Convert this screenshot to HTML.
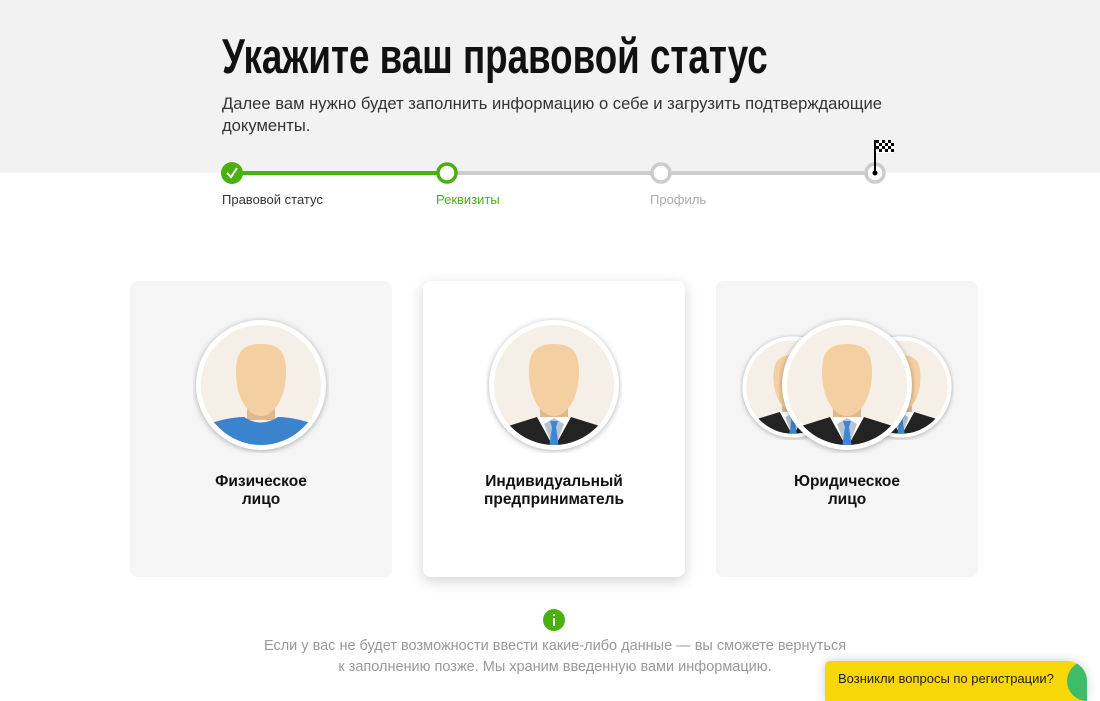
<!DOCTYPE html><html><head><meta charset="utf-8"><style>
*{margin:0;padding:0;box-sizing:border-box}
body{width:1100px;height:693px;overflow:hidden;background:#fff;font-family:"Liberation Sans",sans-serif;position:relative}
.hdr{position:absolute;left:0;top:0;width:1100px;height:173px;background:#f2f2f2}
h1{position:absolute;left:222px;top:29px;font-weight:bold;font-size:49px;color:#111;white-space:nowrap;transform:scaleX(0.75);transform-origin:0 0}
.sub{position:absolute;left:222px;top:93px;font-size:16.6px;line-height:22px;color:#333;width:700px}
.lbl{position:absolute;top:192px;font-size:13px}
.card{position:absolute;top:281px;width:262px;height:296px;border-radius:8px;background:#f5f5f5}
.card.w{background:#fff;box-shadow:0 4px 14px rgba(0,0,0,.18)}
.ct{position:absolute;left:0;width:100%;top:192px;text-align:center;font-weight:bold;font-size:15.5px;line-height:18px;color:#111}
.av{position:absolute}
.note{position:absolute;left:150px;width:810px;top:636px;text-align:center;font-size:14.5px;line-height:21px;color:#999}
.help{position:absolute;left:825px;top:661px;width:262px;height:40px;background:#f7d708;border-radius:5px 20px 0 0;box-shadow:0 0 10px rgba(0,0,0,.2);overflow:hidden;font-size:13px;color:#222;padding:10px 0 0 13px}
.help:after{content:"";position:absolute;right:-20px;top:0;width:40px;height:40px;border-radius:50%;background:#3dbd6a}
</style></head><body>
<svg width="0" height="0" style="position:absolute"><defs>
<clipPath id="cc"><circle cx="65" cy="65" r="60"/></clipPath>
<g id="head"><rect x="0" y="0" width="130" height="130" fill="#f5efe8"/>
<path d="M51 78 L51 100 L79 100 L79 78Z" fill="#dfb98d"/>
<path d="M65 24 C45 24 40 34 40 52 C40 78 52 96 65 96 C78 96 90 78 90 52 C90 34 85 24 65 24Z" fill="#f4cfa1"/></g>
<g id="suit"><use href="#head"/>
<path d="M0 130 L0 112 L48 97 L82 97 L130 112 L130 130Z" fill="#232323"/>
<path d="M48 97 L65 128 L82 97Z" fill="#fff"/>
<path d="M55 104 L65 130 L75 104 L65 98Z" fill="#b8c4d3"/>
<path d="M61 101 L69 101 L67 107 L70 128 L60 128 L63 107Z" fill="#3b87d6"/></g>
<g id="shirt"><use href="#head"/>
<path d="M0 130 L0 108 Q30 97 48 97 Q65 108 82 97 Q100 97 130 108 L130 130Z" fill="#3b83cc"/></g>
</defs></svg>
<div class="hdr"></div>
<h1>Укажите ваш правовой статус</h1>
<div class="sub">Далее вам нужно будет заполнить информацию о себе и загрузить подтверждающие документы.</div>
<svg style="position:absolute;left:0;top:135px" width="1100" height="55">
<line x1="232" y1="38" x2="875" y2="38" stroke="#ccc" stroke-width="4"/>
<line x1="232" y1="38" x2="447" y2="38" stroke="#4caf10" stroke-width="4"/>
<circle cx="232" cy="38" r="11" fill="#4caf10"/>
<path d="M227 38 L231 42 L237 33" stroke="#fff" stroke-width="2" fill="none"/>
<circle cx="447" cy="38" r="9" fill="#fff" stroke="#4caf10" stroke-width="3.5"/>
<circle cx="661" cy="38" r="9" fill="#fff" stroke="#ccc" stroke-width="3.5"/>
<circle cx="875" cy="38" r="9" fill="#fff" stroke="#ccc" stroke-width="3.5"/>
<line x1="875" y1="38" x2="875" y2="5" stroke="#000" stroke-width="2"/>
<circle cx="875" cy="38" r="2.5" fill="#000"/>
<g fill="#000"><rect x="876" y="5" width="18" height="13" fill="#fff"/>
<rect x="876" y="5" width="3" height="3"/><rect x="882" y="5" width="3" height="3"/><rect x="888" y="5" width="3" height="3"/>
<rect x="879" y="8" width="3" height="3"/><rect x="885" y="8" width="3" height="3"/><rect x="891" y="8" width="3" height="3"/>
<rect x="876" y="11" width="3" height="3"/><rect x="882" y="11" width="3" height="3"/><rect x="888" y="11" width="3" height="3"/>
<rect x="879" y="14" width="3" height="3"/><rect x="885" y="14" width="3" height="3"/><rect x="891" y="14" width="3" height="3"/></g>
</svg>
<div class="lbl" style="left:222px;color:#333">Правовой статус</div>
<div class="lbl" style="left:436px;color:#4caf10">Реквизиты</div>
<div class="lbl" style="left:650px;color:#aaa">Профиль</div>
<div class="card" style="left:130px"><div class="ct">Физическое<br>лицо</div></div>
<div class="card w" style="left:423px"><div class="ct">Индивидуальный<br>предприниматель</div></div>
<div class="card" style="left:716px"><div class="ct">Юридическое<br>лицо</div></div>
<svg class="av" style="left:193px;top:317px" width="136" height="136" viewBox="-3 -3 136 136"><circle cx="65" cy="65" r="65" fill="#fff" style="filter:drop-shadow(0 1px 3px rgba(0,0,0,.3))"/><g clip-path="url(#cc)"><use href="#shirt"/></g></svg>
<svg class="av" style="left:486px;top:317px" width="136" height="136" viewBox="-3 -3 136 136"><circle cx="65" cy="65" r="65" fill="#fff" style="filter:drop-shadow(0 1px 3px rgba(0,0,0,.3))"/><g clip-path="url(#cc)"><use href="#suit"/></g></svg>
<svg class="av" style="left:740px;top:334px" width="106" height="106" viewBox="-3 -3 136 136"><circle cx="65" cy="65" r="65" fill="#fff" style="filter:drop-shadow(0 1px 3px rgba(0,0,0,.3))"/><g clip-path="url(#cc)"><use href="#suit"/></g></svg>
<svg class="av" style="left:848px;top:334px" width="106" height="106" viewBox="-3 -3 136 136"><circle cx="65" cy="65" r="65" fill="#fff" style="filter:drop-shadow(0 1px 3px rgba(0,0,0,.3))"/><g clip-path="url(#cc)"><use href="#suit"/></g></svg>
<svg class="av" style="left:779px;top:317px" width="136" height="136" viewBox="-3 -3 136 136"><circle cx="65" cy="65" r="65" fill="#fff" style="filter:drop-shadow(0 1px 3px rgba(0,0,0,.3))"/><g clip-path="url(#cc)"><use href="#suit"/></g></svg>
<svg style="position:absolute;left:543px;top:609px" width="22" height="22"><circle cx="11" cy="11" r="11" fill="#4caf10"/><rect x="10" y="9" width="2" height="8" fill="#fff"/><rect x="10" y="5" width="2" height="2" fill="#fff"/></svg>
<div class="note">Если у вас не будет возможности ввести какие-либо данные — вы сможете вернуться<br>к заполнению позже. Мы храним введенную вами информацию.</div>
<div class="help">Возникли вопросы по регистрации?</div>
</body></html>
